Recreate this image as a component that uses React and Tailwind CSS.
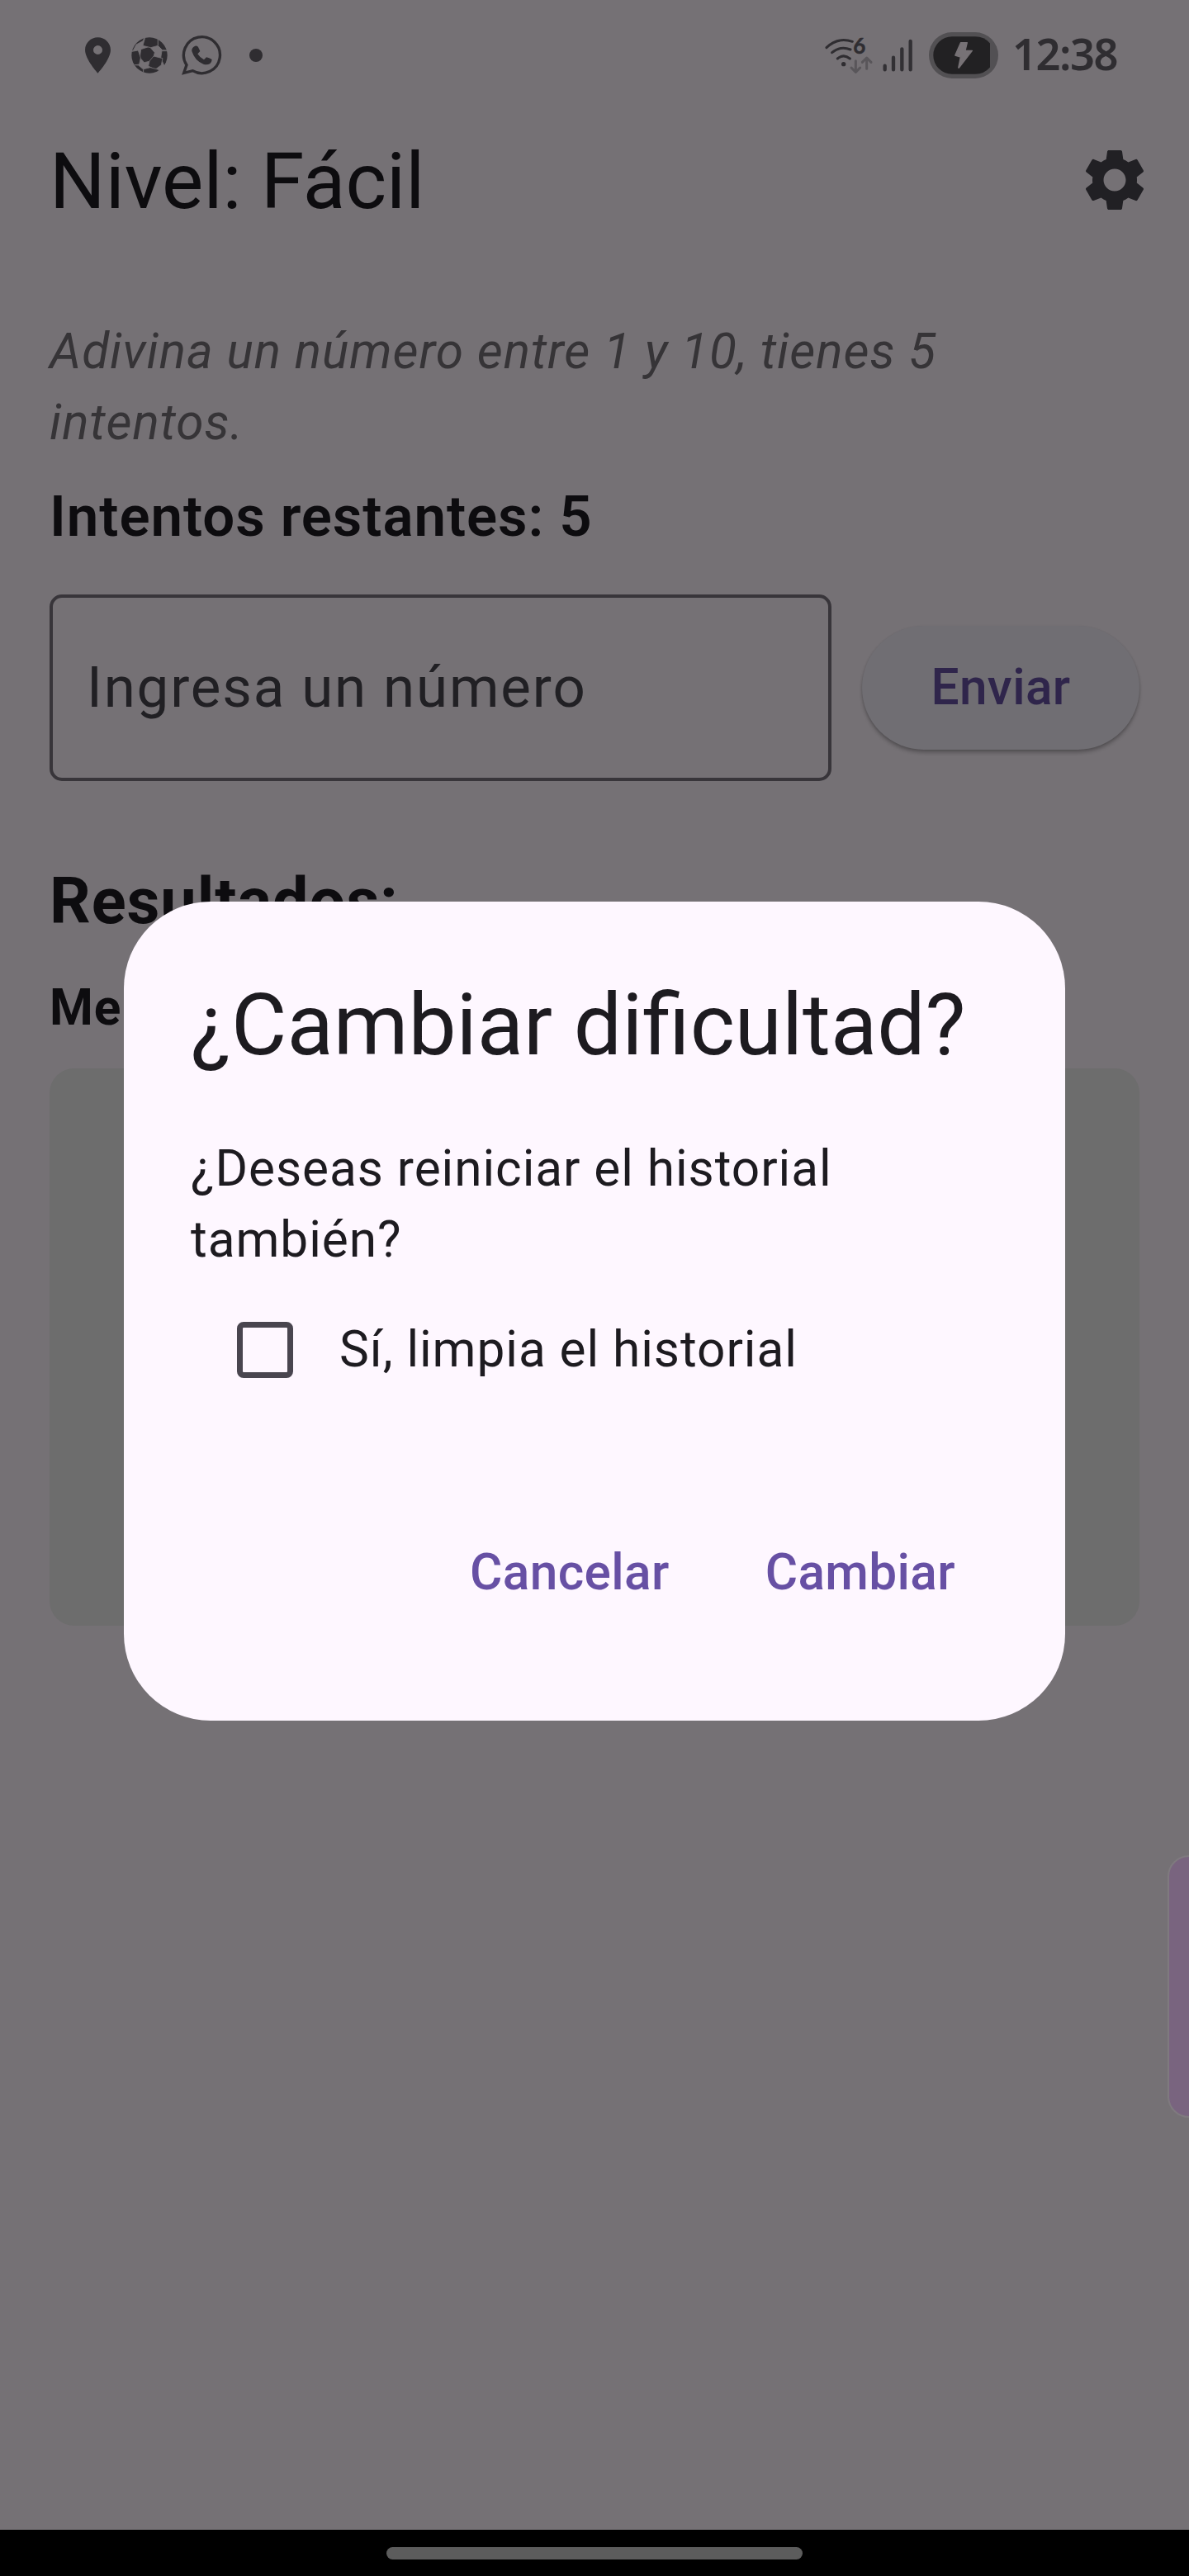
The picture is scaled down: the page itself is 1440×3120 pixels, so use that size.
import React from "react";

function PinIcon() {
  return (
    <svg className="h-[52px] w-[53px]" viewBox="0 0 24 24" preserveAspectRatio="none" fill="#2f2d31">
      <path d="M12 2C8.13 2 5 5.13 5 9c0 5.25 7 13 7 13s7-7.75 7-13c0-3.87-3.13-7-7-7zm0 9.5a2.5 2.5 0 0 1 0-5 2.5 2.5 0 0 1 0 5z" />
    </svg>
  );
}

function BallIcon() {
  return (
    <svg className="size-[44px]" viewBox="238 76 132 132" fill="#2f2d31">
      <defs>
        <clipPath id="ball">
          <circle cx="304" cy="142" r="65" />
        </clipPath>
      </defs>
      <g clipPath="url(#ball)" stroke="#757175" strokeWidth="2.5" strokeLinejoin="round">
        <path d="M273 120 L304 110 L323 132 L316 161 L285 168 L269 150 Z" />
        <path d="M290 70 L335 70 L335 107 L309 114 L280 107 Z" />
        <path d="M335 70 L380 90 L376 124 L351 123 L335 107 Z" />
        <path d="M349 126 L378 126 L376 185 L357 178 L345 152 Z" />
        <path d="M319 145 L352 153 L347 177 L325 194 L300 181 L304 163 Z" />
        <path d="M282 192 L307 186 L337 194 L340 215 L282 215 Z" />
        <path d="M230 130 L263 124 L272 151 L267 175 L245 178 L230 178 Z" />
        <path d="M235 120 L235 70 L290 70 L280 90 L256 103 L244 126 Z" />
        <path d="M235 176 L264 178 L282 193 L280 215 L240 215 Z" />
      </g>
    </svg>
  );
}

function WhatsAppIcon() {
  return (
    <svg className="h-[49px] w-[49px]" viewBox="420 68 147 147">
      <path
        d="M428 207 L438 178 A66 66 0 1 1 460 199 Z"
        fill="none"
        stroke="#2f2d31"
        strokeWidth="10"
        strokeLinejoin="miter"
      />
      <path
        fill="#2f2d31"
        d="M469 109 Q477 107 480 113 L487 128 Q482 134 478 138 Q487 152 501 159 L510 150 Q522 152 530 159 Q530 168 522 174 Q512 179 499 175 Q468 163 457 128 Q455 115 469 109 Z"
      />
    </svg>
  );
}

function WifiIcon() {
  return (
    <svg className="h-[48px] w-[60px] overflow-visible" viewBox="55 70 180 144" fill="none" strokeLinecap="round" strokeLinejoin="round">
      <g stroke="#2f2d31" strokeWidth="9">
        <path d="M64 114 Q104 75 158 92" />
        <path d="M84 132 Q114 106 151 121" />
        <path d="M104 154 Q126 135 149 154" />
      </g>
      <circle cx="126" cy="174" r="8" fill="#2f2d31" />
      <text x="161" y="136" fontSize="78" fontWeight="700" fill="#2f2d31" stroke="#2f2d31" strokeWidth="1.5" className="font-['Lato',sans-serif]">6</text>
      <g stroke="#59565a" strokeWidth="9">
        <path d="M170 162 V203 M154 187 L170 203 L186 187" />
        <path d="M210 191 V151 M194 167 L210 151 L226 167" />
      </g>
    </svg>
  );
}

function SignalIcon() {
  return (
    <svg className="h-[40px] w-[37px]" viewBox="268 80 111 120" stroke="#323034" strokeWidth="13" strokeLinecap="round">
      <path d="M276 178 V192 M307 148 V192 M338 117 V192 M369 89 V192" />
    </svg>
  );
}

function BatteryIcon() {
  return (
    <svg className="h-[56px] w-[84px]" viewBox="0 0 84 56">
      <rect width="84" height="56" rx="28" fill="#525053" />
      <path
        fill="#222123"
        d="M28 5.3 H56 Q67 5.3 74 13.5 V42.5 Q67 50.7 56 50.7 H28 A22.7 22.7 0 0 1 28 5.3 Z"
      />
      <path
        fill="#777276"
        stroke="#777276"
        strokeWidth="1.4"
        strokeLinejoin="round"
        d="M38.5 12.7 H46.3 L44 22.4 H52.4 L36.4 43 H35.8 L38.4 30 L31.8 28 Z"
      />
    </svg>
  );
}

function StatusBar() {
  return (
    <div className="flex h-[113px] items-start justify-between pt-[39px] pr-[87px] pl-[92px]">
      <div className="flex h-[56px] items-center">
        <div className="flex w-[67px] pb-[1px]">
          <PinIcon />
        </div>
        <div className="flex w-[61px]">
          <BallIcon />
        </div>
        <div className="flex w-[82px] pb-[1px]">
          <WhatsAppIcon />
        </div>
        <div className="size-[16px] rounded-full bg-[#2f2d31]" />
      </div>
      <div className="flex h-[56px] items-center">
        <WifiIcon />
        <div className="ml-[11px] flex">
          <SignalIcon />
        </div>
        <div className="ml-[19px] flex">
          <BatteryIcon />
        </div>
        <span className="ml-[17px] w-[127px] pb-[4px] font-['Noto_Sans',sans-serif] text-[52.5px] leading-[56px] font-semibold tracking-[-1.5px] whitespace-nowrap text-[#2f2d31]">
          12:38
        </span>
      </div>
    </div>
  );
}

function AppBar() {
  return (
    <header className="flex h-[210px] items-center justify-between pr-[45px] pl-[60px]">
      <h1 className="pt-[3px] text-[94.875px] leading-[120px] font-normal text-[#0d0c0f]">Nivel: Fácil</h1>
      <svg className="size-[90px]" viewBox="0 0 24 24" fill="#212024">
        <path d="M19.14 12.94c.04-.3.06-.61.06-.94 0-.32-.02-.64-.07-.94l2.03-1.58a.49.49 0 0 0 .12-.61l-1.92-3.32a.488.488 0 0 0-.59-.22l-2.39.96c-.5-.38-1.03-.7-1.62-.94l-.36-2.54a.484.484 0 0 0-.48-.41h-3.84c-.24 0-.43.17-.47.41l-.36 2.54c-.59.24-1.13.57-1.62.94l-2.39-.96c-.22-.08-.47 0-.59.22L2.74 8.87c-.12.21-.08.47.12.61l2.03 1.58c-.05.3-.09.63-.09.94s.02.64.07.94l-2.03 1.58a.49.49 0 0 0-.12.61l1.92 3.32c.12.22.37.29.59.22l2.39-.96c.5.38 1.03.7 1.62.94l.36 2.54c.05.24.24.41.48.41h3.84c.24 0 .44-.17.47-.41l.36-2.54c.59-.24 1.13-.56 1.62-.94l2.39.96c.22.08.47 0 .59-.22l1.92-3.32c.12-.22.07-.47-.12-.61l-2.01-1.58zM12 15.6c-1.98 0-3.6-1.62-3.6-3.6s1.62-3.6 3.6-3.6 3.6 1.62 3.6 3.6-1.62 3.6-3.6 3.6z" />
      </svg>
    </header>
  );
}

function Dialog() {
  return (
    <div className="absolute top-[1092px] left-[150px] flex h-[992px] w-[1140px] flex-col rounded-[105px] bg-[#fef7ff] px-[81px] pt-[81px] pb-[90px] text-[#1d1b20]">
      <h2 className="text-[103.5px] leading-[138px] font-normal whitespace-nowrap">¿Cambiar dificultad?</h2>
      <p className="mt-[61.5px] text-[60.375px] leading-[86.25px] tracking-[0.9375px]">
        ¿Deseas reiniciar el historial
        <br />
        también?
      </p>
      <label className="flex h-[180px] items-center">
        <span className="flex size-[180px] items-center justify-center">
          <span className="size-[68px] rounded-[8px] border-[7.5px] border-[#49454f]" />
        </span>
        <span className="text-[60.375px] leading-[86.25px] tracking-[0.9375px]">Sí, limpia el historial</span>
      </label>
      <div className="mt-auto flex h-[180px] items-center justify-end gap-[116px] pt-[2px] pr-[52px] text-[60.375px] leading-[86.25px] font-medium tracking-[0.375px] text-[#6750a4]">
        <button>Cancelar</button>
        <button>Cambiar</button>
      </div>
    </div>
  );
}

export default function App() {
  return (
    <div className="relative flex h-[3120px] w-[1440px] flex-col overflow-hidden bg-[#757175] font-['Roboto',sans-serif]">
      <StatusBar />
      <AppBar />
      <main className="flex flex-1 flex-col px-[60px] pt-[60px]">
        <p className="text-[60.375px] leading-[86.25px] tracking-[0.9375px] text-[#363437] italic">
          Adivina un número entre 1 y 10, tienes 5
          <br />
          intentos.
        </p>
        <p className="mt-[18.5px] text-[69px] leading-[103px] font-semibold tracking-[0.9375px] text-[#0d0c0f]">
          Intentos restantes: 5
        </p>
        <div className="mt-[43px] flex items-center gap-[37px]">
          <div className="flex h-[226px] w-[947px] items-center rounded-[15px] border-4 border-[#38353a] pb-[2px] pl-[41px] text-[69px] leading-[103px] tracking-[1.875px] text-[#212024]">
            Ingresa un número
          </div>
          <button className="h-[150px] w-[336px] rounded-full bg-[#706e73] text-[60.375px] leading-[86px] font-medium tracking-[0.375px] text-[#2f254b] shadow-[0_4px_4px_rgba(0,0,0,0.22),0_1px_3px_rgba(0,0,0,0.12)]">
            Enviar
          </button>
        </div>
        <h2 className="mt-[90px] text-[77.625px] leading-[111px] font-bold tracking-[0.9375px] text-[#0d0c0f]">
          Resultados:
        </h2>
        <h3 className="mt-[31px] text-[60.375px] leading-[86px] font-bold tracking-[0.9375px] text-[#0d0c0f]">Me</h3>
        <div className="mt-[30px] h-[675px] rounded-[30px] bg-[#6d6d6d]" />
      </main>
      <footer className="flex h-[56px] justify-center bg-black pt-[21px]">
        <div className="h-[15px] w-[504px] rounded-full bg-[#5c5c5c]" />
      </footer>
      <div className="absolute top-[2247px] left-[1414px] h-[318px] w-[30px] rounded-l-[26px] border-2 border-[#7f7a7f] bg-[#79647f]" />
      <Dialog />
    </div>
  );
}
